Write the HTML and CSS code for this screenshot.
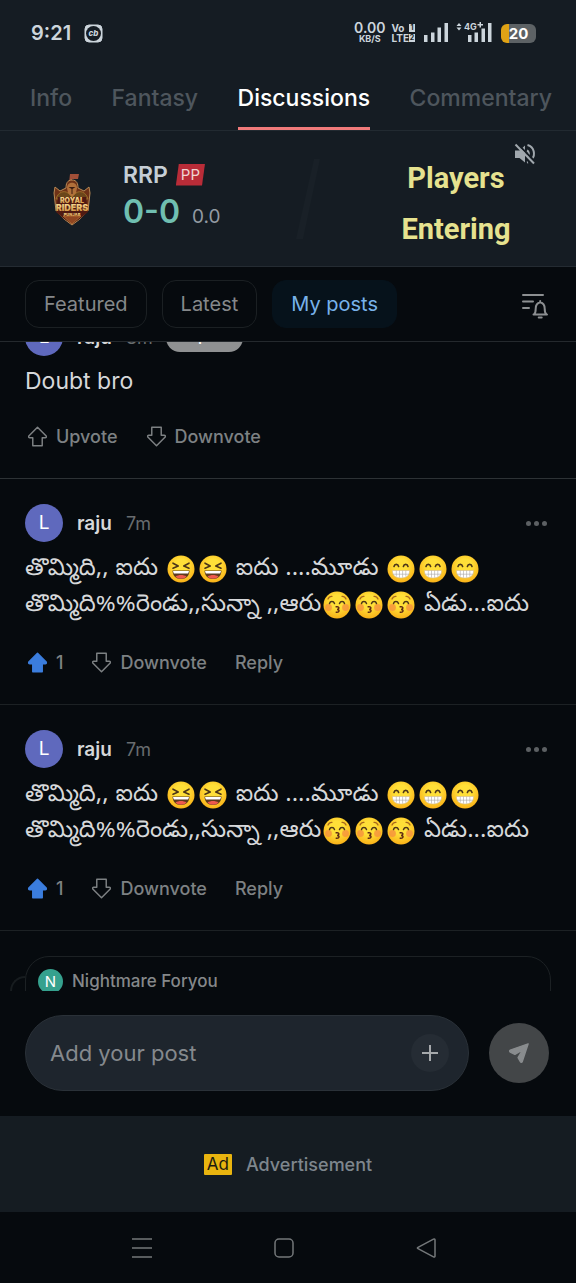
FILE: index.html
```html
<!DOCTYPE html>
<html lang="en">
<head>
<meta charset="utf-8">
<meta name="viewport" content="width=device-width, initial-scale=1">
<title>Discussions</title>
<link rel="stylesheet" href="styles.css">
</head>
<body>
<svg class="sprite" aria-hidden="true">
  <defs>
    <radialGradient id="face" cx="50%" cy="38%" r="62%">
      <stop offset="0.4" stop-color="#ffdf38"/><stop offset="1" stop-color="#f9b118"/>
    </radialGradient>
    <linearGradient id="gold" x1="0" y1="0" x2="0" y2="1">
      <stop offset="0" stop-color="#ffe7a0"/><stop offset="1" stop-color="#c98a35"/>
    </linearGradient>
    <symbol id="arrow-up" viewBox="0 0 20 20"><path d="M10 1.2 18.3 9.600q.5 1.600-1 1.600h-2.800v7.600H5.500v-7.600H2.700q-1.500 0-1-1.600z" stroke-linejoin="round"/></symbol>
    <symbol id="arrow-down" viewBox="0 0 20 20"><path d="M10 18.800 18.300 10.400q.5-1.600-1-1.600h-2.800V1.200H5.500v7.600H2.700q-1.500 0-1 1.600z" stroke-linejoin="round"/></symbol>
    <symbol id="laugh" viewBox="0 0 28 28">
      <circle cx="14" cy="14" r="13.500" fill="url(#face)"/>
      <path d="M6 8.2 11.2 11 6 13.2M22 8.2 16.8 11l5.2 2.2" fill="none" stroke="#4c3518" stroke-width="1.6" stroke-linecap="round" stroke-linejoin="round"/>
      <path d="M5.5 15.5h17c0 5-3.500 8.500-8.500 8.500s-8.500-3.500-8.500-8.500z" fill="#5d3a1c"/>
      <path d="M6 16h16l-.8 2.500H6.800z" fill="#fff"/>
      <path d="M8.500 21.500c3-2 8-2 11 0-2.500 3-8.500 3-11 0z" fill="#ee5a4d"/>
    </symbol>
    <symbol id="grin" viewBox="0 0 28 28">
      <circle cx="14" cy="14" r="13.500" fill="url(#face)"/>
      <path d="M7 11.500c.6-2.800 4-2.800 4.600 0M16.400 11.500c.6-2.800 4-2.800 4.600 0" fill="none" stroke="#4c3518" stroke-width="1.600" stroke-linecap="round"/>
      <path d="M5.500 15.500h17c.3 4.500-2.500 7.500-8.500 7.500s-8.800-3-8.500-7.500z" fill="#fff" stroke="#d7b88a" stroke-width=".6"/>
      <path d="M6 19.200h16M9.300 15.500v6M12.500 15.500v7M15.600 15.500v7M18.800 15.500v6" stroke="#a9a6a4" stroke-width=".6"/>
    </symbol>
    <symbol id="kiss" viewBox="0 0 28 28">
      <circle cx="14" cy="14" r="13.500" fill="url(#face)"/>
      <circle cx="5.500" cy="16.500" r="3.400" fill="#f5923e" opacity=".8"/><circle cx="22.500" cy="16.500" r="3.400" fill="#f5923e" opacity=".8"/>
      <path d="M6.500 12.500c.8-2.600 4-2.600 5 0M21.500 12.500c-.8-2.600-4-2.600-5 0" fill="none" stroke="#4c3518" stroke-width="1.500" stroke-linecap="round"/>
      <path d="M5 8c.8-1.800 2.500-2.800 4-2.700M23 8c-.8-1.800-2.500-2.800-4-2.700" fill="none" stroke="#a8681c" stroke-width="1.300" stroke-linecap="round"/>
      <path d="M13.200 15.800c3.200-.6 3.500 2 1 2.600 2.700.4 2.400 3.200-1 2.800" fill="none" stroke="#5d2a14" stroke-width="1.500" stroke-linecap="round"/>
    </symbol>
  </defs>
</svg>

<header class="status">
  <span class="clock">9:21</span>
  <svg class="cb" width="19" height="19" viewBox="0 0 19 19"><rect x="1" y="1" width="17" height="17" rx="4" fill="#ccd5dc" stroke="#ccd5dc"/><circle cx="9.500" cy="9.500" r="7.500" fill="#151c23"/><text x="9.500" y="12" text-anchor="middle" font-family="Inter, sans-serif" font-size="8" font-weight="800" font-style="italic" fill="#ccd5dc">cb</text></svg>
  <span class="rate"><b>0.00</b><small>KB/S</small></span>
  <span class="volte"><span>Vo <i class="sim">1</i></span><span>LTE<i class="sim">2</i></span></span>
  <svg class="signal" width="25" height="20" viewBox="0 0 25 20" fill="#ccd5dc"><path d="M1 12h3.500v7H1zM8 9.500h3.500V19H8zM14.500 4.500H18V19h-3.500zM21.500 0H25v19h-3.500z"/></svg>
  <svg class="signal4g" width="36" height="23" viewBox="0 0 36 23" fill="#ccd5dc"><path d="M.5 6 3 3l2.500 3zM.5 7.500 3 10.500l2.500-3z"/><text x="8" y="10" font-family="Inter, sans-serif" font-size="9" font-weight="700">4G</text><path d="M23.500 2H25v2h2v1.500h-2v2h-1.500v-2h-2V4h2zM12 15h3.500v7H12zM18.500 12.500H22V22h-3.500zM25.500 8.500H29V22h-3.500zM32 3h3.500v19H32z"/></svg>
  <span class="battery">20</span>
</header>

<nav class="tabs">
  <a href="#info">Info</a>
  <a href="#fantasy">Fantasy</a>
  <a href="#discussions" class="active" aria-current="page">Discussions</a>
  <a href="#commentary">Commentary</a>
</nav>

<section class="score">
  <svg class="crest" width="40" height="54" viewBox="0 0 40 54">
    <path d="M18 2 27 2 26 7 20 7v4h-3z" fill="#a14f38"/>
    <path d="M20 8c5 0 6 4 6 8l6 3 5-4 1 6-2 18-8 8-8 6-8-6-8-8-2-18 1-6 5 4 6-3c0-4 1-8 6-8z" fill="#6e3217" stroke="#b98a55" stroke-width="1"/>
    <path d="M15 16c0-7 10-7 10 0l-1 5-3 3h-2l-3-3z" fill="#b0703a"/><path d="M16.500 15h7l-3 2v5h-1v-5z" fill="#3a1d11"/>
    <path d="M4 27c2-7 8-9 12-6l4 4 4-4c4-3 10-1 12 6z" fill="#6b461a" stroke="#a8762f" stroke-width=".8"/>
    <path d="M6 25h28l2 15-7 6-9 6-9-6-7-6z" fill="#4f1a12"/>
    <path d="M11 44h18l-9 8z" fill="#8f4621" stroke="#c07a3b" stroke-width=".7"/>
    <g text-anchor="middle" font-family="Inter, sans-serif" font-weight="900" fill="url(#gold)"><text x="20" y="31" font-size="7">ROYAL</text><text x="20" y="39" font-size="9">RIDERS</text><text x="20" y="44" font-size="4">PUNJAB</text></g>
  </svg>
  <div class="team">
    <div class="team-line"><strong>RRP</strong><span class="pp">PP</span></div>
    <div class="score-line"><strong>0-0</strong><span>0.0</span></div>
  </div>
  <svg class="slash" width="24" height="80" viewBox="0 0 24 80"><path d="M18 0h6L7 80H0z" fill="#192027"/></svg>
  <p class="event">Players Entering</p>
  <button class="mute" aria-label="Unmute">
    <svg width="22" height="22" viewBox="0 0 22 22"><path d="M1 7.500h4.500L11 2.500v17L5.500 15H1z" fill="#a0a7ad"/><path d="M13 7.500c2 1 2.500 4 1 6M13.500 2c7 2 8 10 4.500 14M14 19.200l-1 .4" fill="none" stroke="#a0a7ad" stroke-width="2"/><path d="M3 .5 21.500 19" stroke="#151c23" stroke-width="2"/><path d="M1.500 1.500 20 20.500" stroke="#a0a7ad" stroke-width="2"/></svg>
  </button>
</section>

<div class="filters">
  <button>Featured</button>
  <button>Latest</button>
  <button class="selected">My posts</button>
  <button class="notify" aria-label="Sort and notifications">
    <svg width="28" height="26" viewBox="0 0 28 26" fill="none" stroke="#8c8f91" stroke-width="2" stroke-linecap="round" stroke-linejoin="round"><path d="M2 2h20M2 8.500h10M2 15h6M12.500 21.500h13.500M13 21.200c1.500-1.200 1.700-3 1.700-5.500 0-3.300 1.600-5.700 4.500-6.400 2.900.7 4.500 3.100 4.500 6.400 0 2.500.2 4.300 1.700 5.500M19.200 8v1M17.700 24.500h3"/></svg>
  </button>
</div>

<main class="feed">
  <article class="post first">
    <div class="author"><span class="avatar">L</span><b>raju</b><time>8m</time><span class="badge">Expert</span></div>
    <p class="latin">Doubt bro</p>
    <div class="actions">
      <button><svg><use href="#arrow-up"/></svg>Upvote</button>
      <button><svg><use href="#arrow-down"/></svg>Downvote</button>
    </div>
  </article>
  <article class="post">
    <div class="author"><span class="avatar">L</span><b>raju</b><time>7m</time><button class="more" aria-label="More"><i></i><i></i><i></i></button></div>
    <p lang="te">తొమ్మిది,, ఐదు <svg class="emoji"><use href="#laugh"/></svg><svg class="emoji"><use href="#laugh"/></svg> ఐదు ....మూడు <svg class="emoji"><use href="#grin"/></svg><svg class="emoji"><use href="#grin"/></svg><svg class="emoji"><use href="#grin"/></svg><br>తొమ్మిది%%రెండు,,సున్నా ,,ఆరు<svg class="emoji"><use href="#kiss"/></svg><svg class="emoji"><use href="#kiss"/></svg><svg class="emoji"><use href="#kiss"/></svg> ఏడు...ఐదు</p>
    <div class="actions">
      <button class="voted"><svg><use href="#arrow-up"/></svg>1</button>
      <button><svg><use href="#arrow-down"/></svg>Downvote</button>
      <button>Reply</button>
    </div>
  </article>
  <article class="post">
    <div class="author"><span class="avatar">L</span><b>raju</b><time>7m</time><button class="more" aria-label="More"><i></i><i></i><i></i></button></div>
    <p lang="te">తొమ్మిది,, ఐదు <svg class="emoji"><use href="#laugh"/></svg><svg class="emoji"><use href="#laugh"/></svg> ఐదు ....మూడు <svg class="emoji"><use href="#grin"/></svg><svg class="emoji"><use href="#grin"/></svg><svg class="emoji"><use href="#grin"/></svg><br>తొమ్మిది%%రెండు,,సున్నా ,,ఆరు<svg class="emoji"><use href="#kiss"/></svg><svg class="emoji"><use href="#kiss"/></svg><svg class="emoji"><use href="#kiss"/></svg> ఏడు...ఐదు</p>
    <div class="actions">
      <button class="voted"><svg><use href="#arrow-up"/></svg>1</button>
      <button><svg><use href="#arrow-down"/></svg>Downvote</button>
      <button>Reply</button>
    </div>
  </article>
  <div class="thread">
    <span class="curve"></span>
    <div class="quote"><span class="avatar small">N</span><b>Nightmare Foryou</b></div>
  </div>
</main>

<form class="composer">
  <div class="field">
    <input type="text" placeholder="Add your post" aria-label="Add your post">
    <button type="button" class="add" aria-label="Add attachment"><svg width="18" height="18" viewBox="0 0 18 18"><path d="M9 1v16M1 9h16" stroke="#a6a9ac" stroke-width="2"/></svg></button>
  </div>
  <button type="button" class="send" aria-label="Send"><svg width="22" height="22" viewBox="0 0 24 24"><path d="M22 2 15.500 21.500c-.4 1-1.500 1-2 0L11 17l5-8.500-8.500 5L2.500 11c-1-.6-1-1.700 0-2.200z" fill="#898c8e" stroke="#898c8e" stroke-width="1.500" stroke-linejoin="round"/></svg></button>
</form>

<aside class="ad"><span class="ad-tag">Ad</span><span>Advertisement</span></aside>

<footer class="system">
  <button aria-label="Recent apps"><svg width="22" height="22" viewBox="0 0 22 22"><path d="M1 2h20M1 11h20M1 20h20"/></svg></button>
  <button aria-label="Home"><svg width="22" height="22" viewBox="0 0 22 22"><rect x="2" y="2" width="18" height="18" rx="4"/></svg></button>
  <button aria-label="Back"><svg width="22" height="22" viewBox="0 0 22 22"><path d="M18.500 2.200c1-.5 1.500 0 1.500.8v16c0 .8-.5 1.300-1.500.8L3 11.700c-.8-.4-.8-1 0-1.400z"/></svg></button>
</footer>
</body>
</html>
```

FILE: styles.css
```css
* { box-sizing: border-box; }
body {
  margin: 0;
  height: 100vh;
  display: flex;
  flex-direction: column;
  background: #060a0e;
  color: #d6d8da;
  font-family: Inter, "Liberation Sans", sans-serif;
  font-size: 18px;
}
button { font: inherit; color: inherit; background: none; border: 0; padding: 0; }
p { margin: 0; }
b, strong { font-weight: 600; }
svg { flex: none; }
.sprite { position: absolute; width: 0; height: 0; }

.status {
  flex: none;
  height: 66px;
  padding: 0 40px 0 31px;
  display: flex;
  align-items: center;
  background: #151c23;
  color: #ccd5dc;
}
.clock { font-size: 20px; font-weight: 600; }
.cb { margin-left: 13px; }
.rate { margin-left: auto; display: flex; flex-direction: column; align-items: center; }
.rate b { font-size: 14px; line-height: 12px; }
.rate small { font-size: 9px; line-height: 10px; font-weight: 700; }
.volte { margin-left: 6px; display: flex; flex-direction: column; font-size: 10px; line-height: 10px; font-weight: 700; }
.volte span { display: flex; justify-content: space-between; align-items: center; }
.sim { background: #ccd5dc; color: #151c23; font-size: 7px; line-height: 8px; width: 6px; text-align: center; font-style: normal; }
.signal { margin-left: 8px; }
.signal4g { margin-left: 8px; margin-bottom: 3px; }
.battery {
  margin-left: 9px;
  width: 35px;
  height: 19px;
  border-radius: 6px;
  background: linear-gradient(90deg, #dfa215 8px, #5d6265 8px);
  color: #fff;
  font-size: 15px;
  line-height: 19px;
  font-weight: 700;
  text-align: center;
}

.tabs {
  flex: none;
  height: 65px;
  padding: 0 24px 0 30px;
  display: flex;
  justify-content: space-between;
  background: #151c23;
  border-bottom: 1px solid #222a31;
  font-size: 23px;
  line-height: 64px;
  overflow: hidden;
}
.tabs a { color: #4e565d; text-decoration: none; font-weight: 500; }
.tabs .active { color: #fff; box-shadow: inset 0 -3px #f07a7a; }

.score {
  flex: none;
  height: 136px;
  padding: 0 25px 0 52px;
  position: relative;
  display: flex;
  align-items: center;
  background: #151c23;
  border-bottom: 1px solid #242b32;
}
.team { margin-left: 31px; padding-bottom: 8px; }
.team-line { display: flex; align-items: center; gap: 8px; height: 34px; font-size: 23px; color: #c6ced6; }
.pp {
  background: #b92c38;
  clip-path: polygon(3px 0, 100% 0, calc(100% - 3px) 100%, 0 100%);
  color: #efd4d2;
  font-size: 15px;
  line-height: 22px;
  padding: 0 5px;
}
.score-line { display: flex; align-items: baseline; gap: 12px; height: 40px; line-height: 40px; font-size: 19px; color: #929aa2; }
.score-line strong { font-size: 32px; color: #70bfb1; }
.slash { margin-left: 75px; }
.event {
  width: 200px;
  margin-left: auto;
  padding: 10px 25px 0 35px;
  font-family: Roboto, sans-serif;
  font-size: 29px;
  line-height: 51px;
  font-weight: 700;
  text-align: center;
  color: #e6e28f;
}
.mute { position: absolute; top: 12px; right: 40px; display: flex; }

.filters {
  flex: none;
  height: 75px;
  padding: 0 27px 0 25px;
  display: flex;
  align-items: center;
  gap: 15px;
  border-bottom: 1px solid #24292d;
  font-size: 20px;
  color: #85888a;
}
.filters button { height: 48px; padding: 0 18px; border: 1px solid #1b2023; border-radius: 14px; }
.filters .selected { background: #06121b; border-color: #06121b; color: #78b2ea; }
.filters .notify { border: 0; padding: 4px 0 0; margin-left: auto; display: flex; align-items: center; }

.feed { flex: 1; min-height: 0; overflow: hidden; }
.post { padding: 25px 25px 30px; border-bottom: 1px solid #1c2124; }
.post.first { margin-top: -49px; border-color: #2d3235; }
.author { display: flex; align-items: center; height: 38px; font-size: 19px; }
.author time { margin-left: 14px; color: #686c6f; font-size: 18px; }
.avatar {
  width: 38px;
  height: 38px;
  margin-right: 14px;
  border-radius: 50%;
  background: #5f69bd;
  color: #fff;
  line-height: 38px;
  text-align: center;
}
.badge { margin-left: 13px; margin-top: 2px; width: 77px; height: 28px; border-radius: 14px; background: #8f9192; color: #fff; font-size: 16px; line-height: 22px; font-weight: 500; text-align: center; }
.more { margin-left: auto; padding: 8px 4px; display: flex; gap: 3px; }
.more i { width: 5px; height: 5px; border-radius: 50%; background: #5c6063; }
.post p { margin: 11px 0 25px; font-family: "Noto Sans Telugu", "Noto Sans", Inter, sans-serif; font-size: 24px; line-height: 36px; white-space: nowrap; }
.post .latin { margin: 9px 0 26px; font-family: Inter, sans-serif; font-size: 23px; line-height: 33px; }
.emoji { width: 28px; height: 28px; margin: -4px 2px; vertical-align: -4px; }
.actions { display: flex; gap: 28px; height: 24px; padding-left: 2px; color: #7d8183; font-weight: 500; }
.actions button { display: flex; align-items: center; gap: 8px; }
.actions svg { width: 21px; height: 21px; fill: none; stroke: #7d8183; stroke-width: 1.4px; }
.actions .voted svg { fill: #3b7ddd; stroke: #3b7ddd; }

.thread { display: flex; padding: 25px 25px 0 10px; }
.curve { width: 15px; height: 40px; margin-top: 20px; border: solid #171c1f; border-width: 2px 0 0 2px; border-radius: 15px 0 0 0; }
.quote { flex: 1; height: 120px; padding: 12px; display: flex; align-items: flex-start; border: 1px solid #1c2124; border-radius: 24px; color: #85888a; font-size: 17px; line-height: 25px; }
.quote b { font-weight: 500; }
.avatar.small { width: 25px; height: 25px; margin-right: 9px; background: #35a18e; font-size: 15px; line-height: 25px; }

.composer { flex: none; height: 125px; padding: 24px 27px 25px 25px; display: flex; align-items: center; gap: 20px; }
.field { flex: 1; min-width: 0; height: 76px; padding: 0 19px 0 24px; display: flex; align-items: center; background: #1e252d; border: 1px solid #2a3138; border-radius: 38px; }
.field input { flex: 1; min-width: 0; padding: 0; background: none; border: 0; outline: 0; font: inherit; font-size: 22px; color: #d6d8da; }
.field input::placeholder { color: #85898d; opacity: 1; }
.add { width: 38px; height: 38px; border-radius: 50%; background: #252c34; display: grid; place-items: center; }
.send { width: 60px; height: 60px; border-radius: 50%; background: #434648; display: grid; place-items: center; }

.ad { flex: none; height: 96px; display: flex; align-items: center; justify-content: center; gap: 14px; background: #151c22; color: #7e868d; font-weight: 500; }
.ad-tag { background: #e9b40f; color: #1d1a10; padding: 0 3px; font-size: 17px; font-weight: 400; line-height: 21px; border-radius: 1px; }

.system { flex: none; height: 71px; padding: 0 79px 0 71px; display: flex; justify-content: space-around; align-items: center; }
.system button { display: flex; }
.system svg { fill: none; stroke: #74787a; stroke-width: 1.5px; }
```
